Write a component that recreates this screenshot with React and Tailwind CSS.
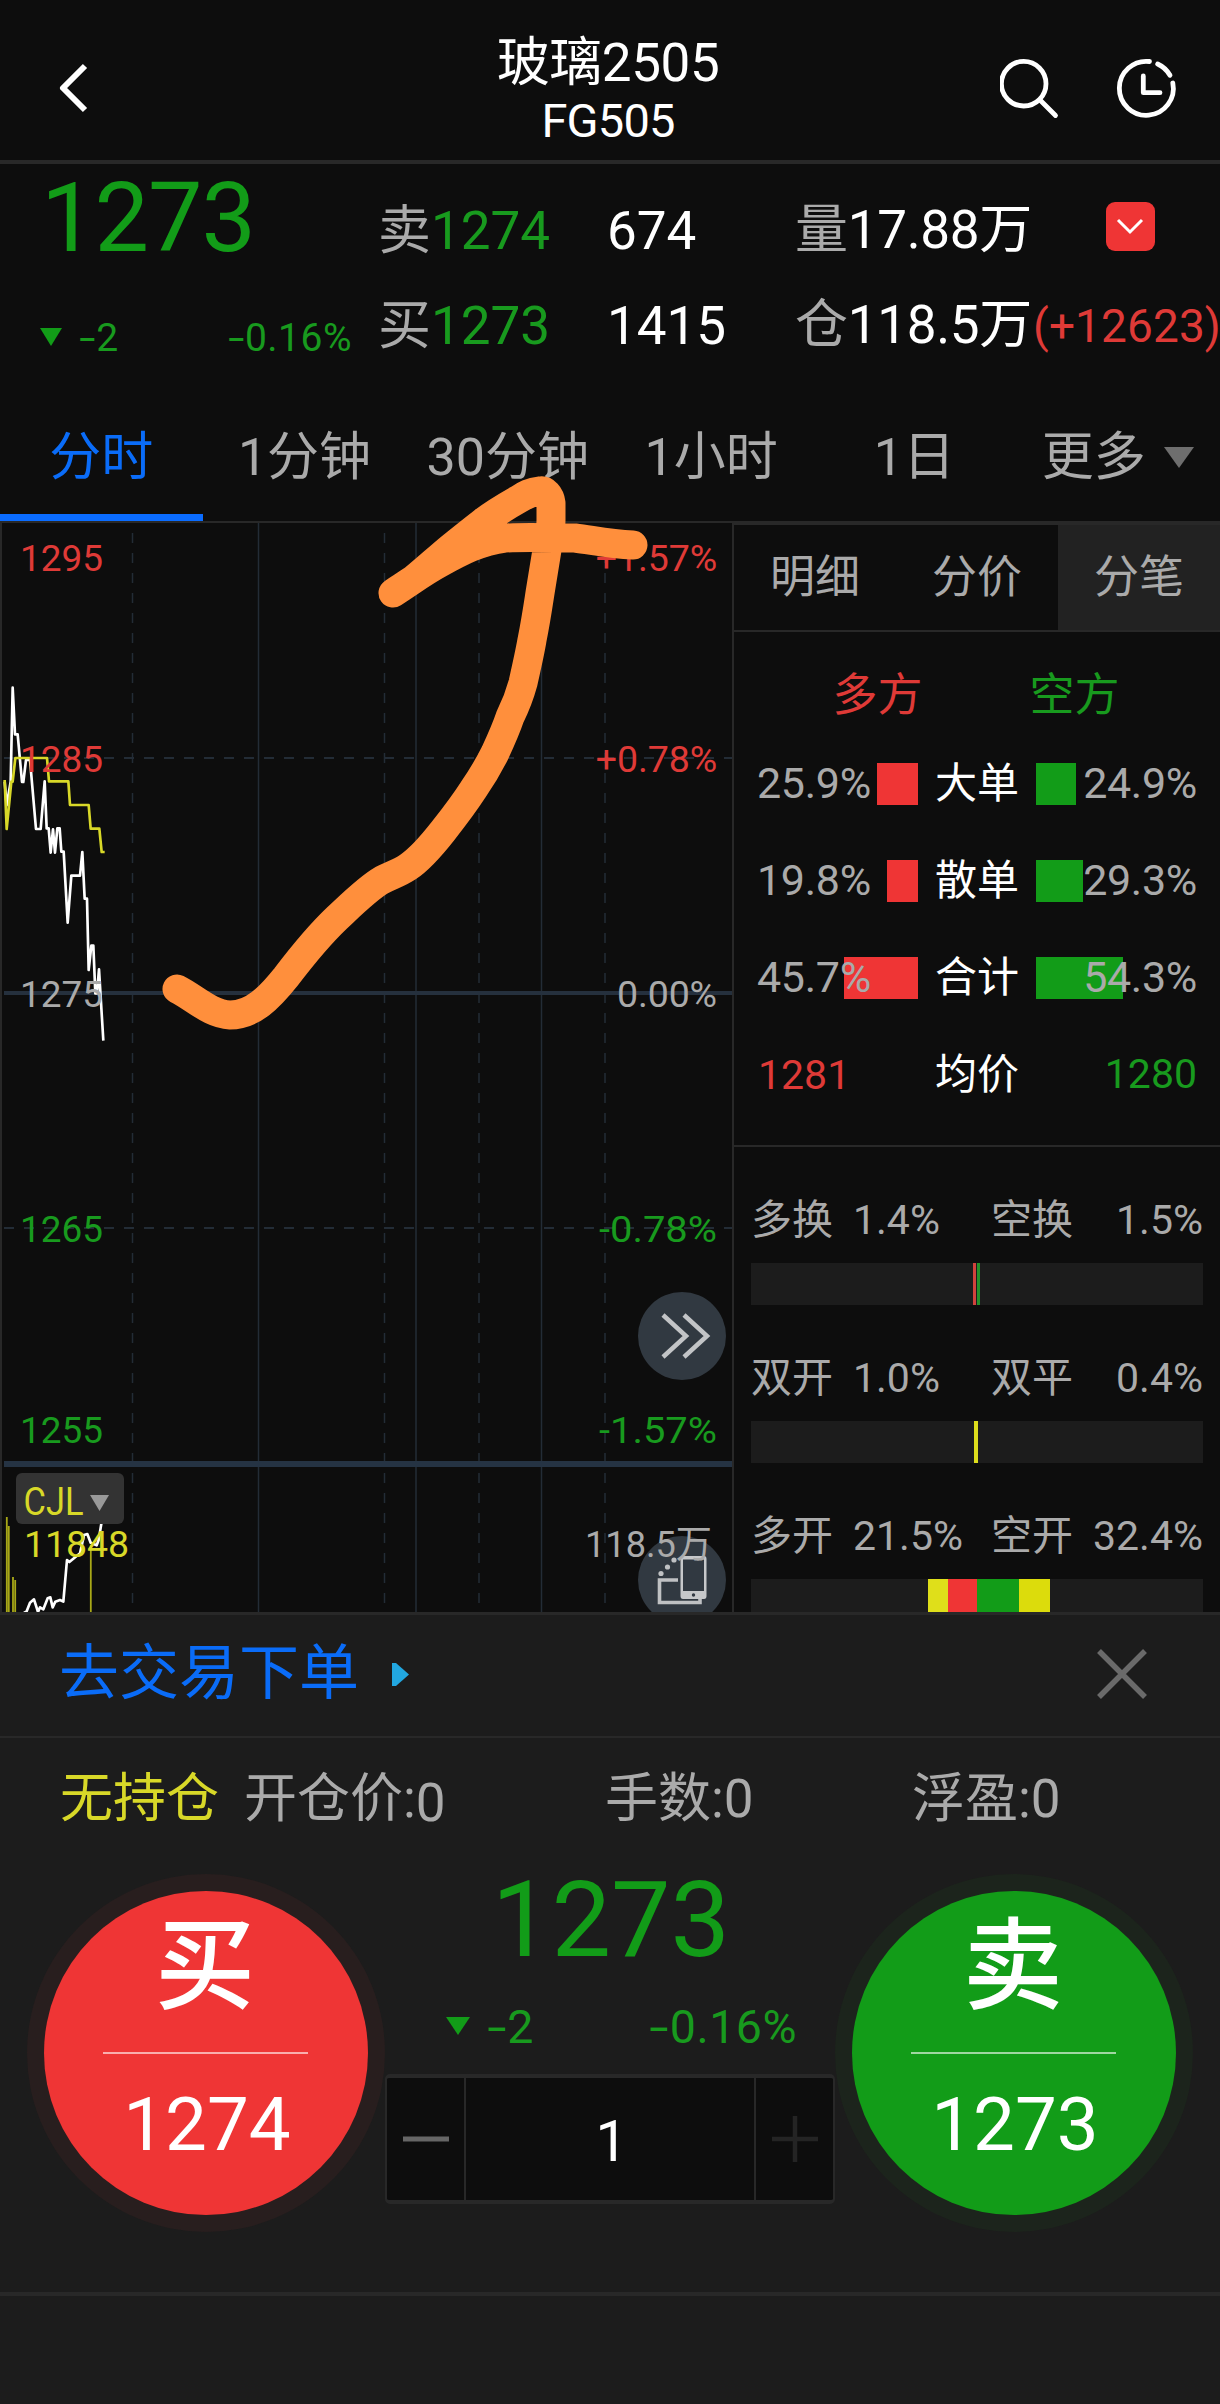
import React, { useState } from 'react';
import clsx from 'clsx';

const periods = ['分时', '1分钟', '30分钟', '1小时', '1日', '更多'];
const detailTabs = ['明细', '分价', '分笔'];

const orderRows = [
  { label: '大单', long: '25.9%', short: '24.9%', longBar: 41, shortBar: 40 },
  { label: '散单', long: '19.8%', short: '29.3%', longBar: 31, shortBar: 47 },
  { label: '合计', long: '45.7%', short: '54.3%', longBar: 74, shortBar: 87 },
];

const flowRows = [
  {
    left: ['多换', '1.4%'],
    right: ['空换', '1.5%'],
    bars: [[222, 3, '#d1423d'], [226, 3, '#23902a']],
  },
  {
    left: ['双开', '1.0%'],
    right: ['双平', '0.4%'],
    bars: [[223, 4, '#dddd1c']],
  },
  {
    left: ['多开', '21.5%'],
    right: ['空开', '32.4%'],
    bars: [[177, 20, '#dfdf1a'], [197, 29, '#ef3535'], [226, 42, '#129c18'], [268, 31, '#dcdc0c']],
  },
];

const Header = () => (
  <header className="h-[164px] flex items-center justify-between border-b-4 border-[#282828] pl-[55px] pr-[42px]">
    <svg className="w-[36px] h-[56px] mt-4" viewBox="0 0 36 56" fill="none" stroke="#fff" strokeWidth="6">
      <path d="M30 6 L8 28 L30 50" strokeLinejoin="round" />
    </svg>
    <div className="flex flex-col items-center ml-[125px] pt-[22px]">
      <h1 className="text-[53px] leading-[60px] text-white tracking-[-0.4px]">玻璃2505</h1>
      <p className="text-[47px] leading-[56px] text-white tracking-[-0.8px]">FG505</p>
    </div>
    <div className="flex items-center gap-[50px] mt-4">
      <svg className="w-[64px] h-[64px]" viewBox="0 0 64 64" fill="none" stroke="#fff" strokeWidth="4.8" strokeLinecap="round">
        <circle cx="23.7" cy="27.7" r="22.3" />
        <path d="M40 44 L55.5 59.5" />
      </svg>
      <svg className="w-[64px] h-[64px]" viewBox="0 0 64 64" fill="none" stroke="#fff" strokeWidth="4.8" strokeLinecap="round" strokeLinejoin="round">
        <path d="M35.5 5.5 A27 27 0 1 0 58.8 27" />
        <path d="M43.7 8 A27 27 0 0 1 56 19.3" />
        <path d="M29.3 20 V36.7 H46" />
      </svg>
    </div>
  </header>
);

const DownMark = ({ className }) => (
  <svg className={className} viewBox="0 0 22 18" fill="#129c18" preserveAspectRatio="none">
    <path d="M0 0 H22 L11 18 Z" />
  </svg>
);

// Roboto's hyphen is short, widen it for signed numbers
const Signed = ({ value, className }) => (
  <span className={className}>
    <span className="inline-block origin-right scale-x-[1.5]">-</span>
    {value}
  </span>
);

const Quote = () => (
  <section className="h-[225px] flex text-[53px] text-white whitespace-nowrap">
    <div className="w-[378px] flex-none text-[#129c18]">
      <div className="h-[109px] pl-[41px] text-[97px] leading-[109px] tracking-[-1px]">1273</div>
      <div className="h-[131px] flex items-center pl-[40px] pr-[26px] text-[39px] text-[#189a1e]">
        <DownMark className="w-[22px] h-[18px] -mt-1" />
        <Signed className="ml-[23px] tracking-[0.5px]" value="2" />
        <Signed className="ml-auto tracking-[0.5px]" value="0.16%" />
      </div>
    </div>
    <div className="w-[229px] flex-none">
      <div className="leading-[134px]"><span className="text-[#aaa]">卖</span><span className="text-[#189a1e]">1274</span></div>
      <div className="leading-[56px]"><span className="text-[#aaa]">买</span><span className="text-[#189a1e]">1273</span></div>
    </div>
    <div className="w-[188px] flex-none">
      <div className="leading-[134px]">674</div>
      <div className="leading-[56px]">1415</div>
    </div>
    <div className="flex-1 tracking-[-0.3px]">
      <div className="h-[134px] flex items-center pr-[66px]">
        <span><span className="text-[#aaa]">量</span>17.88万</span>
        <span className="ml-auto mt-[-9px] w-[49px] h-[49px] rounded-[9px] bg-[#ef3535] flex items-center justify-center">
          <svg className="w-[28px] h-[18px]" viewBox="0 0 28 18" fill="none" stroke="#fff" strokeWidth="3">
            <path d="M2 2 L14 14 L26 2" />
          </svg>
        </span>
      </div>
      <div className="h-[56px] flex items-center">
        <span><span className="text-[#aaa]">仓</span>118.5万</span>
        <span className="ml-[1px] pt-[1px] text-[46px] tracking-[0.1px] text-[#df3a37]">(+12623)</span>
      </div>
    </div>
  </section>
);

const PeriodTabs = ({ active, onChange }) => (
  <nav className="h-[134px] flex border-b-2 border-[#282828] text-[52px]">
    {periods.map((name) => (
      <button
        key={name}
        onClick={() => onChange(name)}
        className={clsx(
          'flex-1 basis-0 flex items-center justify-center whitespace-nowrap border-b-[7px] pt-[12px] pr-[1px]',
          active === name ? 'border-[#0a6cff] text-[#0a6cf8]' : 'border-transparent text-[#aaa]'
        )}
      >
        {name}
        {name === '更多' && (
          <svg className="w-[30px] h-[21px] ml-[18px]" viewBox="0 0 30 21" fill="#6e6e6e">
            <path d="M0 0 H30 L15 21 Z" />
          </svg>
        )}
      </button>
    ))}
  </nav>
);

const axisLabels = [
  { y: 571, price: '1295', pct: '+1.57%', color: '#df3a37' },
  { y: 772, price: '1285', pct: '+0.78%', color: '#df3a37' },
  { y: 1007, price: '1275', pct: '0.00%', color: '#aaa' },
  { y: 1242, price: '1265', pct: '-0.78%', color: '#189a1e' },
  { y: 1443, price: '1255', pct: '-1.57%', color: '#189a1e' },
];

const Chart = () => (
  <div className="relative w-[732px] flex-none border-l-2 border-[#282828] overflow-hidden">
    <svg className="block w-[730px] h-[1089px]" viewBox="2 523 730 1089" fill="none">
      {/* grid */}
      <g stroke="#232c36" strokeWidth="1.5">
        {[258.5, 416, 541.5].map((x) => <path key={x} d={`M${x} 523 V1612`} />)}
        {[132.5, 384.5, 479, 605].map((x) => (
          <path key={x} d={`M${x} 533 V1612`} strokeDasharray="10 10" />
        ))}
        <path d="M4 758 H732 M4 1228 H732" strokeDasharray="10 10" strokeWidth="2" />
      </g>
      <path d="M4 993 H732" stroke="#25303d" strokeWidth="4" />
      <path d="M4 1464 H732" stroke="#253343" strokeWidth="6" />

      {/* price and average */}
      <g transform="translate(0 660) scale(0.33333)" strokeWidth="8" strokeLinejoin="round">
        <path
          stroke="#fff"
          d="M14 365 L20 436 L32 365 L38 83 L45 223 L53 223 L66 366 L70 366 L78 300 L90 300 L108 507 L122 507 L134 364 L140 505 L146 505 L152 578 L159 508 L165 578 L172 505 L179 505 L184 575 L191 575 L203 788 L214 647 L240 647 L247 576 L254 716 L261 716 L266 930 L274 857 L280 857 L286 1000 L291 1000 L297 928 L310 1142"
        />
        <path
          stroke="#d8d828"
          d="M14 360 L20 507 L34 365 L38 365 L46 294 L141 294 L147 364 L205 364 L210 435 L266 435 L272 506 L298 506 L305 576 L314 576"
        />
      </g>

      {/* volume and open interest */}
      <g stroke="#a8a818" strokeWidth="1.8">
        <path d="M6.8 1517 V1612 M8.8 1526 V1612 M13 1577 V1612 M15.2 1580 V1612 M90.8 1545 V1612" />
      </g>
      <path
        transform="translate(0 1460) scale(0.33333)"
        stroke="#fff"
        strokeWidth="8"
        strokeLinejoin="round"
        d="M72 459 L80 454 L90 428 L102 418 L114 456 L120 442 L130 448 L143 415 L151 412 L158 442 L166 425 L180 420 L190 425 L201 300 L208 306 L240 280 L252 225 L262 222 L272 248 L290 256 L296 240 L305 185"
      />

      <circle cx="682" cy="1336" r="44" fill="#313941" />
      <path d="M663 1315 L686 1336 L663 1357 M684 1315 L707 1336 L684 1357" stroke="#c2c4c6" strokeWidth="4.5" />

      {/* rotate screen */}
      <circle cx="682" cy="1580" r="44" fill="#313941" />
      <path d="M678 1580 H659.5 V1602.5 H700 V1599" stroke="#bfc1c3" strokeWidth="3.6" />
      <path fillRule="evenodd" fill="#c6c8ca" d="M683 1556 H704 Q706.5 1556 706.5 1559 V1596 Q706.5 1599 704 1599 H683 Q680.5 1599 680.5 1596 V1559 Q680.5 1556 683 1556 Z M683 1559.5 V1591 H704 V1559.5 Z" />
      <circle cx="693.5" cy="1595" r="1.7" fill="#313941" />
      <g fill="#bfc1c3">
        <circle cx="661" cy="1573.5" r="2.6" />
        <circle cx="667.5" cy="1567" r="2.6" />
        <circle cx="674" cy="1560" r="2.6" />
      </g>

      <rect x="16" y="1473" width="108" height="51" rx="6" fill="#333" />
      <path d="M90 1495 H109 L99.5 1511 Z" fill="#999" />
      <g fontSize="37.5">
        <text x="23.5" y="1515" fill="#d8d828" fontSize="38.5" textLength="60" lengthAdjust="spacingAndGlyphs">CJL</text>
        <text x="24" y="1557" fill="#d8d828" textLength="105">11848</text>
        <text x="585" y="1557" fill="#aaa" textLength="127" lengthAdjust="spacingAndGlyphs">118.5万</text>
        {axisLabels.map((l) => (
          <g key={l.y} fill={l.color}>
            <text x="20" y={l.y} textLength="83" lengthAdjust="spacingAndGlyphs">{l.price}</text>
            {l.pct.startsWith('-') ? (
              <text x="599" y={l.y} textLength="118" lengthAdjust="spacingAndGlyphs">{l.pct}</text>
            ) : (
              <text x="717" y={l.y} textAnchor="end" letterSpacing="-0.1">{l.pct}</text>
            )}
          </g>
        ))}
      </g>
    </svg>
  </div>
);

const Detail = () => {
  const [tab, setTab] = useState('分笔');

  return (
    <div className="flex-1 border-l-2 border-t-2 border-[#282828] overflow-hidden text-[43px] text-[#aaa]">
      <div className="h-[107px] flex border-b-2 border-[#282828] text-[45px]">
        {detailTabs.map((name) => (
          <button
            key={name}
            onClick={() => setTab(name)}
            className={clsx('flex-1 basis-0', tab === name && 'bg-[#222]')}
          >
            {name}
          </button>
        ))}
      </div>

      <div className="h-[515px] border-b-2 border-[#282828]">
        <div className="h-[103px] pt-[24px] flex justify-center gap-[107px] pr-[2px] text-[45px] leading-[80px]">
          <span className="text-[#df3a37]">多方</span>
          <span className="text-[#189a1e]">空方</span>
        </div>
        {orderRows.map((row) => (
          <div key={row.label} className="h-[97px] flex items-center justify-between pl-[22px] pr-[22px]">
            <div className="w-[162px] h-[42px] relative flex items-center">
              <span className="absolute right-0 h-[42px] bg-[#ef3535]" style={{ width: row.longBar }} />
              <span className="relative pl-[1px] tracking-[-0.3px]">{row.long}</span>
            </div>
            <span className="text-white text-[42px]">{row.label}</span>
            <div className="w-[162px] h-[42px] relative flex items-center justify-end">
              <span className="absolute left-0 h-[42px] bg-[#129c18]" style={{ width: row.shortBar }} />
              <span className="relative pr-[1px] tracking-[-0.3px]">{row.short}</span>
            </div>
          </div>
        ))}
        <div className="h-[97px] flex items-center justify-between pl-[22px] pr-[22px] text-[41px]">
          <span className="w-[162px] pl-[2px] pt-[3px] text-[#df3a37]">1281</span>
          <span className="text-white text-[42px]">均价</span>
          <span className="w-[162px] pr-[1px] text-right text-[#189a1e]">1280</span>
        </div>
      </div>

      <div className="px-[17px] pt-[37px] text-[41px]">
        {flowRows.map((row) => (
          <div key={row.left[0]} className="h-[158px]">
            <div className="h-[79px] flex items-center pb-[6px]">
              <span className="w-[102px]">{row.left[0]}</span>
              <span className="w-[138px]">{row.left[1]}</span>
              <span>{row.right[0]}</span>
              <span className="ml-auto">{row.right[1]}</span>
            </div>
            <div className="relative h-[42px] bg-[#1c1c1c]">
              {row.bars.map(([left, width, background]) => (
                <span key={left} className="absolute h-full" style={{ left, width, background }} />
              ))}
            </div>
          </div>
        ))}
      </div>
    </div>
  );
};

// Hand-drawn arrow on top of the chart
const Scribble = () => (
  <svg
    className="absolute left-0 top-0 w-[1220px] h-[1100px] pointer-events-none"
    viewBox="0 0 1220 1100"
    fill="none"
    stroke="#ff8f3c"
    strokeWidth="29"
    strokeLinecap="round"
    strokeLinejoin="round"
  >
    <path d="M177 989 C195 998 210 1014 230 1015 C253 1015 270 997 286 977 C302 956 317 937 337 918 C353 903 368 888 382 880 C392 875 399 873 408 867 C420 859 432 845 443 831 C454 817 464 804 473 790 C482 777 488 767 495 753 C501 740 506 729 510 717 C516 705 520 694 523 683 C527 665 530 652 532 640 C536 620 538 606 540 593 C543 575 545 562 547 550 C549 540 551 532 551 520 V503 C550 495 545 490 540 491 C530 492 525 495 519 499 C505 507 493 514 483 522 C470 532 459 541 449 549 C436 560 425 570 414 579 C406 585 400 588 393 593 C410 582 425 571 440 563 C460 552 480 541 505 538 C530 537 555 538 575 538 C592 540 608 544 633 545" />
  </svg>
);

const TradeCircle = ({ label, price, className }) => (
  <button
    className={clsx('w-[324px] h-[324px] flex-none rounded-full flex flex-col items-center text-white', className)}
  >
    <span className="h-[161px] text-[100px] leading-[151px] font-medium pr-[2px]">{label}</span>
    <span className="w-[205px] h-[2px] bg-white/60 -ml-[1px]" />
    <span className="text-[74.5px] leading-[141px] pl-[2px]">{price}</span>
  </button>
);

const TradePanel = () => (
  <section className="h-[792px] bg-[#1c1c1c] border-t-[3px] border-[#282828] text-[53px] text-[#aaa] whitespace-nowrap">
    <div className="h-[123px] flex items-center border-b-2 border-[#282828] pl-[59px] pr-[73px] pb-[3px]">
      <span className="text-[60px] text-[#0a6cf8]">去交易下单</span>
      <svg className="w-[17px] h-[23px] ml-[33px]" viewBox="0 0 17 23" fill="#22a7e0">
        <path d="M0 0 H4 L17 11.5 L4 23 H0 Z" />
      </svg>
      <svg className="w-[50px] h-[50px] ml-auto" viewBox="0 0 50 50" stroke="#6a6a6a" strokeWidth="5.5">
        <path d="M2 2 L48 48 M48 2 L2 48" />
      </svg>
    </div>

    <div className="h-[137px] flex pl-[60px] leading-[123px]">
      <span className="w-[184px] text-[#d8d828]">无持仓</span>
      <span className="w-[361px]">开仓价:<span className="relative top-[4px]">0</span></span>
      <span className="w-[307px]">手数:0</span>
      <span>浮盈:0</span>
    </div>

    <div className="h-[417px] flex justify-between items-start px-[44px] pt-[16px]">
      <TradeCircle label="买" price="1274" className="bg-[#ef3535] shadow-[0_0_0_17px_#281e1e]" />
      <div className="flex-none w-[450px] -mt-[19px] text-[#129c18]">
        <div className="text-[106px] leading-[96px] text-center pl-[2px]">1273</div>
        <div className="h-[106px] flex items-center pt-[14px] pl-[61px] pr-[38px] text-[46.5px] text-[#189a1e]">
          <DownMark className="w-[24px] h-[18px] -mt-1" />
          <Signed className="ml-[24px] tracking-[0.5px]" value="2" />
          <Signed className="ml-auto tracking-[0.5px]" value="0.16%" />
        </div>
        <div className="h-[130px] flex border-x-2 border-y-4 border-[#282828] rounded-[5px] bg-[#0d0d0d] text-white text-[57px]">
          <button className="w-[77px] flex items-center justify-center">
            <svg className="w-[46px] h-[46px]" viewBox="0 0 46 46" stroke="#666" strokeWidth="5">
              <path d="M0 23 H46" />
            </svg>
          </button>
          <span className="flex-1 border-x-2 border-[#282828] flex items-center justify-center pt-[5px] pl-[3px]">1</span>
          <button className="w-[77px] flex items-center justify-center">
            <svg className="w-[46px] h-[46px]" viewBox="0 0 46 46" stroke="#242424" strokeWidth="4.5">
              <path d="M0 23 H46 M23 0 V46" />
            </svg>
          </button>
        </div>
      </div>
      <TradeCircle label="卖" price="1273" className="bg-[#129c18] shadow-[0_0_0_17px_#1c241c]" />
    </div>
    <div className="h-1 bg-[#282828]" />
  </section>
);

const App = () => {
  const [period, setPeriod] = useState('分时');

  return (
    <div className="relative w-[1220px] h-[2404px] overflow-hidden bg-[#0d0d0d] font-['Roboto','Noto_Sans_CJK_SC',sans-serif]">
      <Header />
      <Quote />
      <PeriodTabs active={period} onChange={setPeriod} />
      <main className="h-[1089px] flex">
        <Chart />
        <Detail />
      </main>
      <TradePanel />
      <Scribble />
    </div>
  );
};

export default App;
